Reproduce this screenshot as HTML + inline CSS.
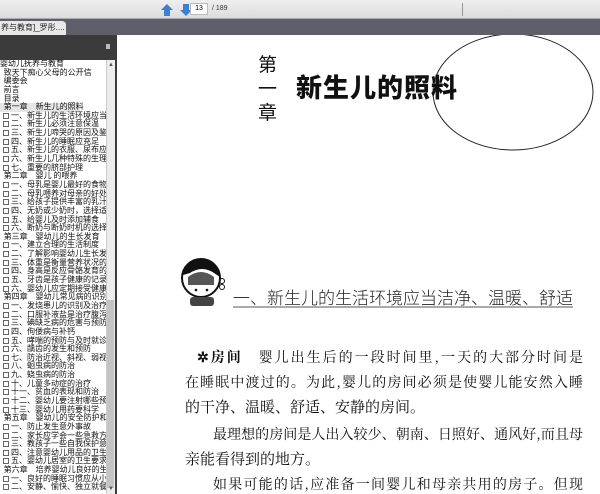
<!DOCTYPE html>
<html><head><meta charset="utf-8"><style>
*{margin:0;padding:0;box-sizing:border-box}
body{width:600px;height:494px;overflow:hidden;background:#fff;position:relative;font-family:"Liberation Sans","Noto Sans CJK SC",sans-serif}
.abs{position:absolute}
#tb{left:0;top:0;width:600px;height:19px;background:linear-gradient(#efefef,#dcdcdc);border-bottom:1px solid #aaa}
#tabs{left:0;top:19px;width:600px;height:16px;background:#5f5f6b}
#tab{left:0;top:21px;width:66px;height:14px;background:#e8e8e8;font-size:8px;line-height:14px;padding-left:1px;color:#222;border-radius:0 4px 0 0;white-space:nowrap;overflow:hidden}
#lp{left:0;top:35px;width:117px;height:459px;background:#3b3b3b}
#tree{left:0;top:60px;width:106px;height:434px;background:#fff;font-family:"Noto Sans CJK SC",sans-serif;font-size:8px;line-height:8.65px;color:#111;white-space:nowrap;overflow:hidden}
#tree div{height:8.65px}
.b{display:inline-block;width:6px;height:6px;border:1px solid #666;margin:0 2px 0 3px;vertical-align:-1px}
#sb{left:106px;top:60px;width:9px;height:434px;background:#ececec;border-left:1px solid #ccc}
#thumb{left:107px;top:300px;width:7px;height:188px;background:#c4c4c4}
.cn{font-family:"Noto Serif CJK SC","Noto Sans CJK SC",serif;color:#111}
.ln{position:absolute;left:185px;width:398px;font-size:14px;height:20px;line-height:20px;text-align:justify;text-align-last:justify;white-space:nowrap}
</style></head><body>
<div id="tb" class="abs"></div>
<div class="abs" style="left:462px;top:3px;width:1px;height:13px;background:#999"></div>
<svg class="abs" style="left:160px;top:3px" width="34" height="14"><path d="M7 1 L13 7 H10 V13 H4 V7 H1 Z" fill="#3d7fd0"/><path d="M26 13 L32 7 H29 V1 H23 V7 H20 Z" fill="#3d7fd0"/></svg>
<div class="abs" style="left:190px;top:3px;width:18px;height:12px;background:#fff;border:1px solid #bbb;font-size:7px;line-height:10px;text-align:center">13</div>
<div class="abs" style="left:212px;top:3px;font-size:7px;line-height:12px;color:#333">/ 189</div>
<div id="tabs" class="abs"></div>
<div id="tab" class="abs">养与教育]_罗彤.... <b style="margin-left:3px">×</b></div>
<div id="lp" class="abs"></div>
<div class="abs" style="left:106px;top:44px;width:4px;height:5px;background:#bbb"></div>
<div id="tree" class="abs">
<div>婴幼儿抚养与教育</div><div>&nbsp; 致天下痴心父母的公开信</div><div>&nbsp; 编委会</div><div>&nbsp; 前言</div><div>&nbsp; 目录</div>
<div style="background:#e6e6e6;width:80px">&nbsp; 第一章　新生儿的照料</div>
<div><span class="b"></span>一、新生儿的生活环境应当</div><div><span class="b"></span>二、新生儿必须注意保温</div><div><span class="b"></span>三、新生儿啼哭的原因及鉴</div><div><span class="b"></span>四、新生儿的睡眠应充足</div><div><span class="b"></span>五、新生儿的衣服、尿布应</div><div><span class="b"></span>六、新生儿几种特殊的生理</div><div><span class="b"></span>七、重要的脐部护理</div>
<div>&nbsp; 第二章　婴儿 的喂养</div>
<div><span class="b"></span>一、母乳是婴儿最好的食物</div><div><span class="b"></span>二、母乳喂养对母亲的好处</div><div><span class="b"></span>三、给孩子提供丰富的乳汁</div><div><span class="b"></span>四、无奶或少奶时，选择适</div><div><span class="b"></span>五、给婴儿及时添加辅食</div><div><span class="b"></span>六、断奶与断奶时机的选择</div>
<div>&nbsp; 第三章　婴幼儿的生长发育</div>
<div><span class="b"></span>一、建立合理的生活制度</div><div><span class="b"></span>二、了解影响婴幼儿生长发</div><div><span class="b"></span>三、体重是衡量营养状况的</div><div><span class="b"></span>四、身高是反应骨骼发育的</div><div><span class="b"></span>五、牙齿是孩子健康的记录</div><div><span class="b"></span>六、婴幼儿应定期接受健康</div>
<div>&nbsp; 第四章　婴幼儿常见病的识别</div>
<div><span class="b"></span>一、发烧患儿的识别及治疗</div><div><span class="b"></span>二、口服补液盐是治疗腹泻</div><div><span class="b"></span>三、碘缺乏病的危害与预防</div><div><span class="b"></span>四、佝偻病与补钙</div><div><span class="b"></span>五、哮喘的预防与及时就诊</div><div><span class="b"></span>六、龋齿的发生和预防</div><div><span class="b"></span>七、防治近视、斜视、弱视</div><div><span class="b"></span>八、蛔虫病的防治</div><div><span class="b"></span>九、蛲虫病的防治</div><div><span class="b"></span>十、儿童多动症的治疗</div><div><span class="b"></span>十一、贫血的表现和防治</div><div><span class="b"></span>十二、婴幼儿要注射哪些预</div><div><span class="b"></span>十三、婴幼儿用药要科学</div>
<div>&nbsp; 第五章　婴幼儿的安全防护和</div>
<div><span class="b"></span>一、防止发生意外事故</div><div><span class="b"></span>二、家长应学会一些急救方</div><div><span class="b"></span>三、教孩子一些自我保护意</div><div><span class="b"></span>四、注意婴幼儿用品的卫生</div><div><span class="b"></span>五、婴幼儿居室的卫生要求</div>
<div>&nbsp; 第六章　培养婴幼儿良好的生</div>
<div><span class="b"></span>一、良好的睡眠习惯应从小</div><div><span class="b"></span>二、安静、愉快、独立就餐</div>
</div>
<div id="sb" class="abs"></div><div id="thumb" class="abs"></div>
<div class="abs" style="left:108px;top:62px;font-size:6px;color:#555">▲</div>
<div class="abs" style="left:108px;top:486px;font-size:6px;color:#555">▼</div>

<div class="abs" style="left:117px;top:35px;width:483px;height:459px;overflow:hidden">
<svg class="abs" style="left:0;top:0" width="483" height="459"><ellipse cx="396" cy="57" rx="80" ry="58" fill="none" stroke="#222" stroke-width="1"/><line x1="116" y1="272" x2="456" y2="272" stroke="#555" stroke-width="1"/></svg>
</div>
<div class="abs cn" style="left:258px;top:52px;font-size:19px;line-height:24px;width:20px;font-family:'Noto Sans CJK SC',sans-serif">第<br>一<br>章</div>
<div class="abs" style="left:296px;top:72px;font-size:26px;font-weight:900;line-height:30px;font-family:'Noto Sans CJK SC',sans-serif;color:#111;letter-spacing:1px">新生儿的照料</div>
<svg class="abs" style="left:178px;top:255px" width="55" height="55">
<circle cx="23" cy="23" r="19" fill="#fff" stroke="#111" stroke-width="2"/>
<path d="M5 20 Q8 3 25 4 Q40 5 42 22 L36 18 Q24 10 12 18 Z" fill="#111"/>
<path d="M10 22 Q23 12 36 22 L36 30 L10 30 Z" fill="#555"/>
<circle cx="44" cy="26" r="2.5" fill="none" stroke="#111"/><circle cx="44" cy="32" r="2.5" fill="none" stroke="#111"/>
<rect x="12" y="42" width="24" height="9" rx="3" fill="#444"/>
<circle cx="18" cy="35" r="1.3" fill="#111"/><circle cx="29" cy="35" r="1.3" fill="#111"/>
</svg>
<div class="abs" style="left:233px;top:285px;font-size:17px;line-height:24px;color:#222;font-family:'Noto Sans CJK SC',sans-serif;font-weight:300;white-space:nowrap">一、新生儿的生活环境应当洁净、温暖、舒适</div>
<div class="ln cn" style="top:347px;left:197px;width:386px"><b>✲</b><span style="font-weight:bold">房间</span>　婴儿出生后的一段时间里,一天的大部分时间是</div>
<div class="ln cn" style="top:372px">在睡眠中渡过的。为此,婴儿的房间必须是使婴儿能安然入睡</div>
<div class="ln cn" style="top:397px;text-align-last:left;font-size:15px">的干净、温暖、舒适、安静的房间。</div>
<div class="ln cn" style="top:424px;left:213px;width:370px">最理想的房间是人出入较少、朝南、日照好、通风好,而且母</div>
<div class="ln cn" style="top:449px;text-align-last:left;font-size:15px">亲能看得到的地方。</div>
<div class="ln cn" style="top:474px;left:213px;width:370px">如果可能的话,应准备一间婴儿和母亲共用的房子。但现</div>
</body></html>
